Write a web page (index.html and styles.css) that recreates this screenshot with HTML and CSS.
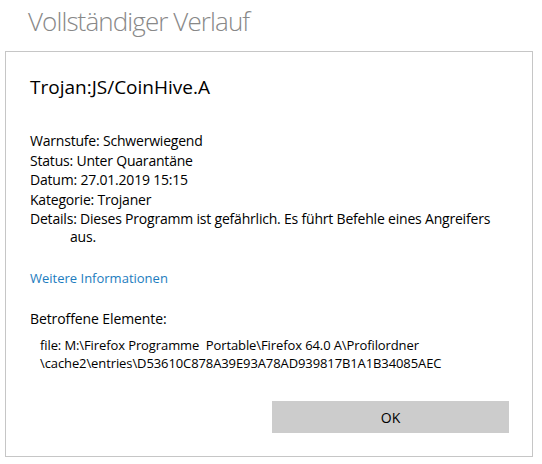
FILE: index.html
```html
<!DOCTYPE html>
<html lang="de">
<head>
<meta charset="utf-8">
<link rel="stylesheet" href="styles.css">
</head>
<body>
<h1 class="page-title">Vollständiger Verlauf</h1>
<div class="dialog">
  <h2 class="threat-name">Trojan:JS/CoinHive.A</h2>
  <div class="props">
    <div class="row">Warnstufe: Schwerwiegend</div>
    <div class="row">Status: Unter Quarantäne</div>
    <div class="row">Datum: 27.01.2019 15:15</div>
    <div class="row">Kategorie: Trojaner</div>
    <div class="row details">Details: Dieses Programm ist gefährlich. Es führt Befehle eines Angreifers aus.</div>
  </div>
  <a class="more" href="#">Weitere Informationen</a>
  <div class="affected-title">Betroffene Elemente:</div>
  <div class="affected">file: M:\Firefox Programme&nbsp; Portable\Firefox 64.0 A\Profilordner<br>\cache2\entries\D53610C878A39E93A78AD939817B1A1B34085AEC</div>
  <div class="actions"><button class="ok">OK</button></div>
</div>
</body>
</html>
```
FILE: styles.css
```css
html, body { margin: 0; padding: 0; background: #fff; }
body {
  font-family: "Open Sans", "Noto Sans", sans-serif;
  color: #000;
  width: 542px;
  height: 464px;
  overflow: hidden;
}
.page-title {
  margin: 0;
  padding: 3px 0 0 28px;
  height: 48px;
  box-sizing: border-box;
  font-size: 26px;
  font-weight: 300;
  letter-spacing: -0.9px;
  color: #888888;
  line-height: 36px;
}
.dialog {
  margin: 3px 0 0 5px;
  width: 528px;
  height: 406px;
  box-sizing: border-box;
  border: 1px solid #c6c6c6;
  padding: 0 23px 0 24px;
  display: flex;
  flex-direction: column;
}
.threat-name {
  margin: 22px 0 0;
  font-size: 19px;
  font-weight: 400;
  line-height: 26px;
}
.props {
  margin-top: 31px;
  font-size: 14px;
  letter-spacing: -0.2px;
}
.row { line-height: 19.5px; }
.details {
  padding-left: 40px;
  text-indent: -40px;
  line-height: 18px;
  padding-top: 1px;
}
.more {
  margin-top: 23px;
  font-size: 13px;
  color: #1c7cbe;
  text-decoration: none;
  line-height: 18px;
  align-self: flex-start;
}
.affected-title {
  margin-top: 22px;
  font-size: 14px;
  letter-spacing: -0.1px;
  line-height: 20px;
}
.affected {
  margin-top: 7px;
  padding-left: 10px;
  font-size: 13px;
  letter-spacing: -0.1px;
  line-height: 18px;
}
.actions {
  margin-top: auto;
  padding-bottom: 23px;
  display: flex;
  justify-content: flex-end;
}
.ok {
  width: 237px;
  height: 32px;
  margin-right: 0;
  border: none;
  background: #cccccc;
  font-family: inherit;
  font-size: 14px;
  color: #000;
}
```
